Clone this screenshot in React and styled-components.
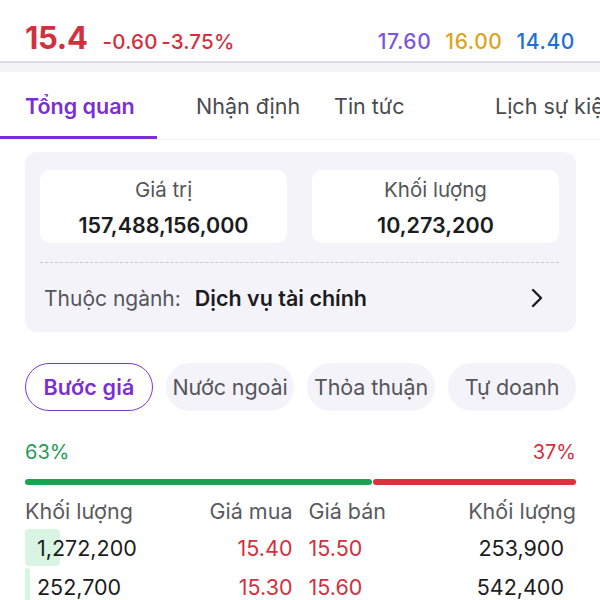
import React from "react";
import styled, { createGlobalStyle } from "styled-components";

const Global = createGlobalStyle`
  html, body { margin: 0; padding: 0; background: #fff; }
  body { font-family: Inter, "Noto Sans", sans-serif; color: #1c1c1e; }
  * { box-sizing: border-box; }
`;

const Page = styled.div`
  width: 600px;
  height: 600px;
  overflow: hidden;
  background: #fff;
`;

const Header = styled.div`
  display: flex;
  align-items: baseline;
  padding: 19px 25px 0 25px;
  height: 61px;
`;

const Price = styled.span`
  font-size: 31px;
  font-weight: 700;
  color: #d42f3e;
  letter-spacing: -0.3px;
`;

const Change = styled.span`
  font-size: 20.5px;
  font-weight: 500;
  color: #d42f3e;
  margin-left: 15px;
  word-spacing: -2px;
  letter-spacing: 0.2px;
`;

const Refs = styled.div`
  margin-left: auto;
  display: flex;
  gap: 14px;
`;

const Ref = styled.span`
  font-size: 21px;
  font-weight: 500;
  letter-spacing: 0.6px;
  color: ${(p) => p.$c};
`;

const Divider = styled.div`
  height: 11px;
  border-top: 2px solid #dedde3;
  background: #f4f4f8;
`;

const Tabs = styled.div`
  display: flex;
  height: 68px;
  border-bottom: 1px solid #f0f0f3;
  white-space: nowrap;
  overflow: hidden;
`;

const Tab = styled.div`
  position: relative;
  display: flex;
  align-items: center;
  flex: none;
  width: ${(p) => p.$w}px;
  padding-left: ${(p) => p.$pl}px;
  font-size: 21.5px;
  font-weight: ${(p) => (p.$active ? 600 : 400)};
  color: ${(p) => (p.$active ? "#7a2fd4" : "#4a4a4f")};
  &::after {
    content: "";
    display: ${(p) => (p.$active ? "block" : "none")};
    position: absolute;
    left: 0;
    right: 0;
    bottom: 0;
    height: 3px;
    background: #7a2fd4;
  }
`;

const Card = styled.div`
  margin: 12px 24px 0 25px;
  background: #f4f3fa;
  border-radius: 12px;
  padding: 18px 17px 0 15px;
  height: 180px;
`;

const Stats = styled.div`
  display: grid;
  grid-template-columns: 1fr 1fr;
  gap: 25px;
`;

const StatBox = styled.div`
  background: #fff;
  border-radius: 10px;
  height: 73px;
  display: flex;
  flex-direction: column;
  align-items: center;
  padding-top: 6px;
`;

const StatLabel = styled.div`
  font-size: 20.5px;
  color: #55555a;
  line-height: 28px;
`;

const StatValue = styled.div`
  font-size: 21.5px;
  font-weight: 600;
  color: #1c1c1e;
  line-height: 30px;
  margin-top: 6px;
`;

const Dashed = styled.div`
  margin-top: 19px;
  border-top: 1px dashed #c9c9cf;
`;

const IndustryRow = styled.div`
  display: flex;
  align-items: center;
  height: 70px;
  padding: 0 16px 0 4px;
  font-size: 21px;
`;

const IndLabel = styled.span`
  color: #55555a;
`;

const IndValue = styled.span`
  font-weight: 600;
  color: #1c1c1e;
  margin-left: 14px;
  font-size: 21.5px;
`;

const Chevron = styled.svg`
  margin-left: auto;
`;

const Pills = styled.div`
  display: grid;
  grid-template-columns: repeat(4, 1fr);
  gap: 13px;
  margin: 31px 24px 0 25px;
`;

const Pill = styled.div`
  height: 48px;
  border-radius: 24px;
  display: flex;
  align-items: center;
  justify-content: center;
  font-size: 21.5px;
  white-space: nowrap;
  letter-spacing: ${(p) => (p.$active ? "0.2px" : "-0.1px")};
  font-weight: ${(p) => (p.$active ? 600 : 400)};
  color: ${(p) => (p.$active ? "#7a2fd4" : "#55555a")};
  background: ${(p) => (p.$active ? "#fff" : "#f4f3fa")};
  border: ${(p) => (p.$active ? "1.5px solid #7a3ad0" : "none")};
`;

const Ratio = styled.div`
  display: flex;
  justify-content: space-between;
  margin: 29px 24px 0 25px;
  font-size: 20px;
  line-height: 24px;
`;

const Pct = styled.span`
  color: ${(p) => p.$c};
`;

const Bar = styled.div`
  display: flex;
  gap: 1px;
  margin: 15px 24px 0 25px;
  height: 6px;
`;

const BarSeg = styled.div`
  height: 6px;
  border-radius: 3px;
  background: ${(p) => p.$c};
`;

const Table = styled.div`
  margin: 8px 24px 0 25px;
`;

const Row = styled.div`
  display: grid;
  grid-template-columns: 1fr 107px 16px 107px 1fr;
  align-items: center;
  height: ${(p) => (p.$head ? 35 : 39)}px;
  font-size: 21.5px;
`;

const Cell = styled.div`
  position: relative;
  text-align: ${(p) => p.$align || "left"};
  color: ${(p) => p.$c || "#1c1c1e"};
  padding: ${(p) => p.$pad || "0"};
  white-space: nowrap;
`;

const VolBg = styled.div`
  position: absolute;
  left: 0;
  top: -6px;
  bottom: -5px;
  border-radius: 4px;
  background: #d7f5e2;
  z-index: 0;
`;

const CellText = styled.span`
  position: relative;
  z-index: 1;
`;

const tabs = [
  { label: "Tổng quan", w: 157, pl: 25, active: true },
  { label: "Nhận định", w: 177, pl: 39 },
  { label: "Tin tức", w: 161, pl: 0 },
  { label: "Lịch sự kiện", w: 200, pl: 0 },
];

const rows = [
  { bv: "1,272,200", bp: "15.40", sp: "15.50", sv: "253,900", w: 35 },
  { bv: "252,700", bp: "15.30", sp: "15.60", sv: "542,400", w: 5 },
];

export default function App() {
  return (
    <Page>
      <Global />
      <Header>
        <Price>15.4</Price>
        <Change>-0.60 -3.75%</Change>
        <Refs>
          <Ref $c="#7b55e0">17.60</Ref>
          <Ref $c="#dba51c">16.00</Ref>
          <Ref $c="#1f6fd2">14.40</Ref>
        </Refs>
      </Header>
      <Divider />
      <Tabs>
        {tabs.map((t) => (
          <Tab key={t.label} $w={t.w} $pl={t.pl} $active={t.active}>
            {t.label}
          </Tab>
        ))}
      </Tabs>
      <Card>
        <Stats>
          <StatBox>
            <StatLabel>Giá trị</StatLabel>
            <StatValue>157,488,156,000</StatValue>
          </StatBox>
          <StatBox>
            <StatLabel>Khối lượng</StatLabel>
            <StatValue>10,273,200</StatValue>
          </StatBox>
        </Stats>
        <Dashed />
        <IndustryRow>
          <IndLabel>Thuộc ngành:</IndLabel>
          <IndValue>Dịch vụ tài chính</IndValue>
          <Chevron width="12" height="20" viewBox="0 0 12 20">
            <path d="M2 2 L10 10 L2 18" fill="none" stroke="#1c1c1e" strokeWidth="2.4" strokeLinecap="round" strokeLinejoin="round" />
          </Chevron>
        </IndustryRow>
      </Card>
      <Pills>
        <Pill $active>Bước giá</Pill>
        <Pill>Nước ngoài</Pill>
        <Pill>Thỏa thuận</Pill>
        <Pill>Tự doanh</Pill>
      </Pills>
      <Ratio>
        <Pct $c="#1f9d57">63%</Pct>
        <Pct $c="#d42f3e">37%</Pct>
      </Ratio>
      <Bar>
        <BarSeg $c="#17a554" style={{ width: "63%" }} />
        <BarSeg $c="#d8333f" style={{ flex: 1 }} />
      </Bar>
      <Table>
        <Row $head>
          <Cell $c="#5a5a60">Khối lượng</Cell>
          <Cell $c="#5a5a60" $align="right">Giá mua</Cell>
          <Cell />
          <Cell $c="#5a5a60">Giá bán</Cell>
          <Cell $c="#5a5a60" $align="right">Khối lượng</Cell>
        </Row>
        {rows.map((r) => (
          <Row key={r.bv}>
            <Cell $pad="0 0 0 12px">
              <VolBg style={{ width: r.w }} />
              <CellText>{r.bv}</CellText>
            </Cell>
            <Cell $c="#d42f3e" $align="right">{r.bp}</Cell>
            <Cell />
            <Cell $c="#d42f3e">{r.sp}</Cell>
            <Cell $align="right" $pad="0 12px 0 0">{r.sv}</Cell>
          </Row>
        ))}
      </Table>
    </Page>
  );
}
